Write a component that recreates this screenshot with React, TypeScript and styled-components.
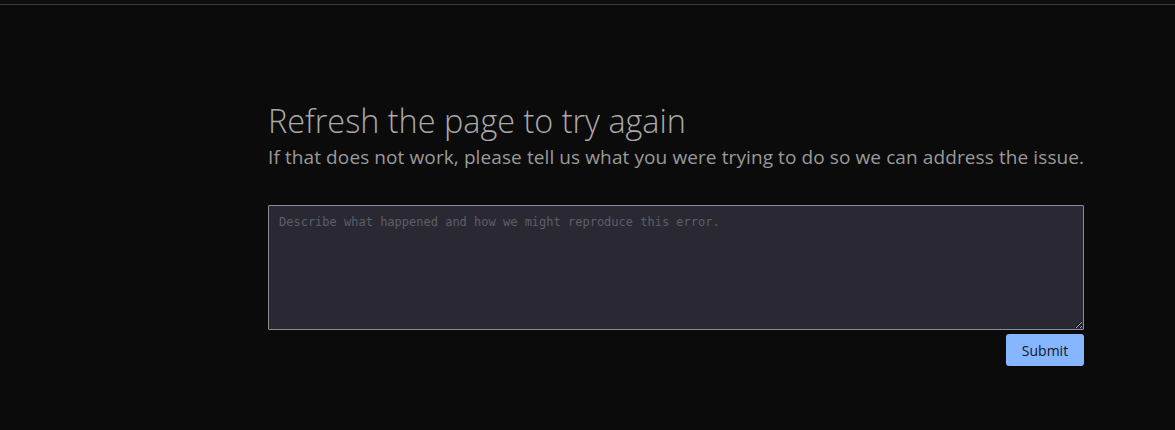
import React from "react";
import styled, { createGlobalStyle } from "styled-components";

const Global = createGlobalStyle`
  html, body { margin: 0; padding: 0; background: #0b0b0b; }
  body { font-family: "Open Sans", "Noto Sans", sans-serif; }
`;

const Page = styled.div`
  min-height: 430px;
  background: #0b0b0b;
  border-top: 4px solid #0f0f0f;
`;

const TopRule = styled.div`
  height: 1px;
  background: #3a3a3a;
`;

const Content = styled.main`
  width: 816px;
  margin-left: 268px;
  padding-top: 95px;
  display: flex;
  flex-direction: column;
`;

const Title = styled.h1`
  margin: 0;
  font-weight: 300;
  font-size: 32.4px;
  line-height: 40px;
  color: #a9a9a9;
`;

const Subtitle = styled.p`
  margin: 0;
  font-weight: 400;
  font-size: 19px;
  line-height: 34px;
  color: #9a9a9a;
  letter-spacing: 0.1px;
  white-space: nowrap;
`;

const Form = styled.form`
  margin-top: 31px;
  display: flex;
  flex-direction: column;
  align-items: flex-end;
  gap: 4px;
`;

const TextArea = styled.textarea`
  box-sizing: border-box;
  width: 100%;
  height: 125px;
  background: #2a2933;
  border: 1px solid #8c8c94;
  border-radius: 1px;
  padding: 9px 10px;
  font-family: "DejaVu Sans Mono", monospace;
  font-size: 12px;
  color: #ccc;
  outline: none;
  &::placeholder { color: #5e5e68; }
`;

const Button = styled.button`
  width: 78px;
  height: 32px;
  border: none;
  border-radius: 3px;
  background: #85b6ff;
  color: #0d1626;
  font-family: "Open Sans", "Noto Sans", sans-serif;
  font-size: 14px;
  cursor: pointer;
`;

export default function App() {
  return (
    <Page>
      <Global />
      <TopRule />
      <Content>
        <Title>Refresh the page to try again</Title>
        <Subtitle>
          If that does not work, please tell us what you were trying to do so we can address the issue.
        </Subtitle>
        <Form onSubmit={(e) => e.preventDefault()}>
          <TextArea placeholder="Describe what happened and how we might reproduce this error." />
          <Button type="submit">Submit</Button>
        </Form>
      </Content>
    </Page>
  );
}
